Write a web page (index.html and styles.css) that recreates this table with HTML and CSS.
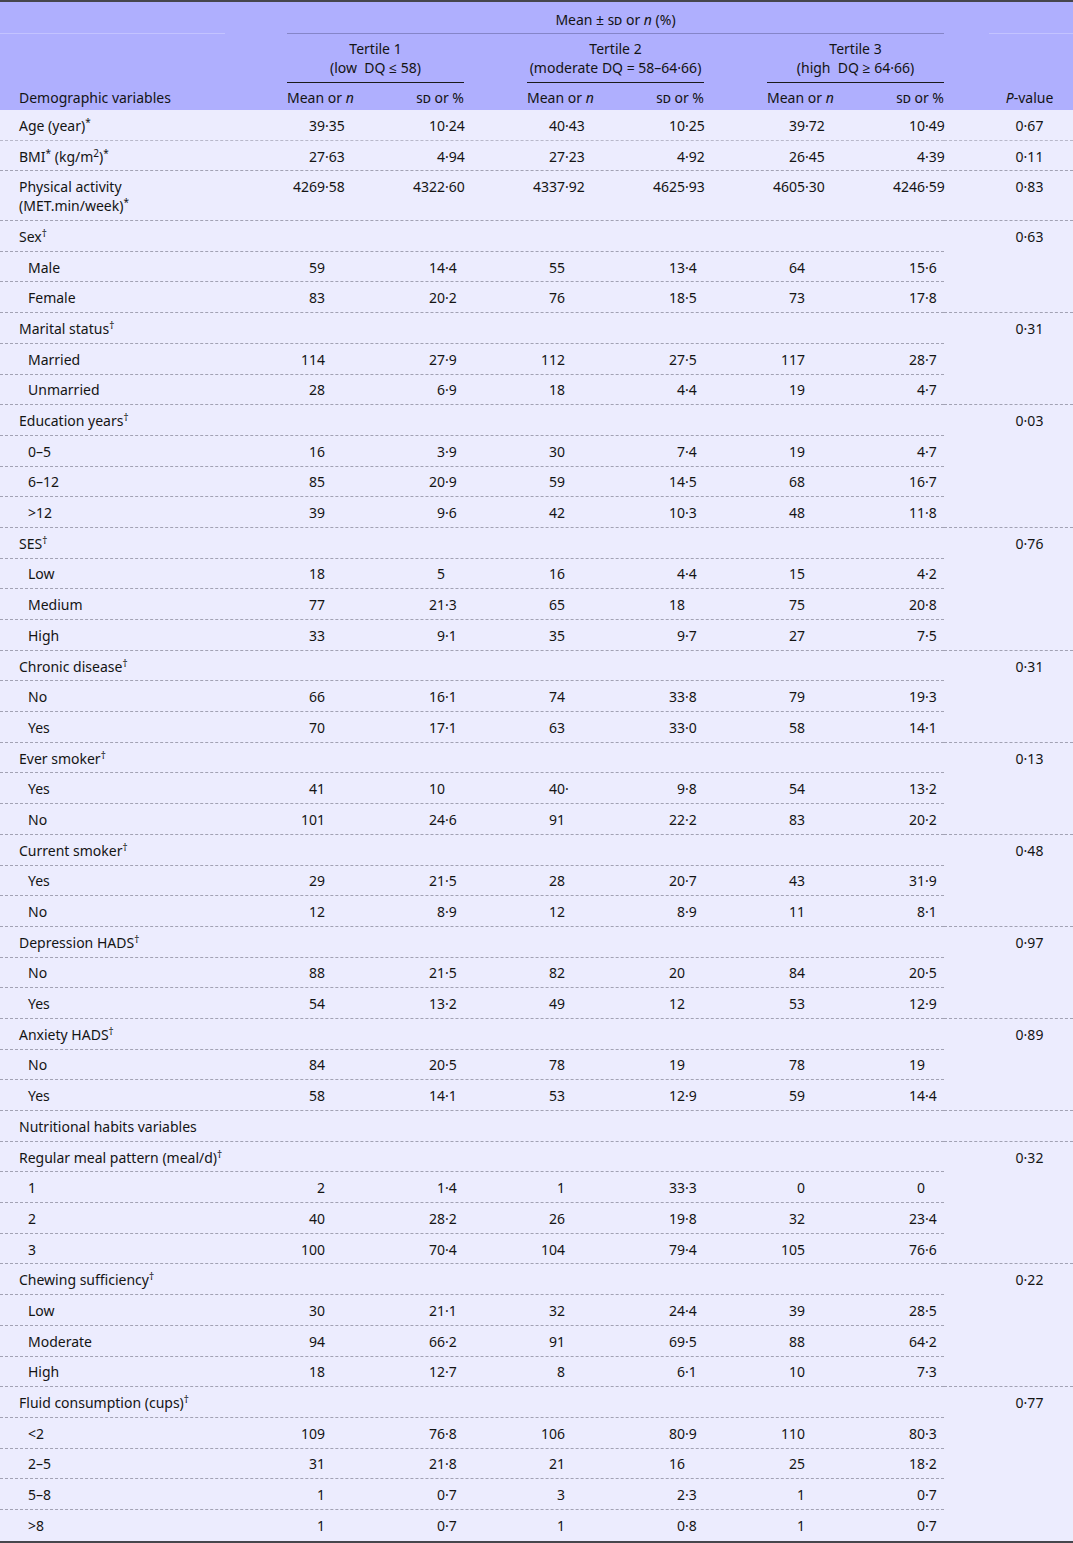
FILE: index.html
```html
<!DOCTYPE html>
<html lang="en">
<head>
<meta charset="utf-8">
<title>Table</title>
<link rel="stylesheet" href="styles.css">
</head>
<body>
<div class="tbl">
  <div class="thead">
    <div class="hr1">
      <div class="hl"></div>
      <div class="hspan">Mean ± <span class="sc">sd</span> or <i>n</i> (%)</div>
      <div class="hp"></div>
    </div>
    <div class="hr2">
      <div class="lab"></div>
      <div class="tt">Tertile 1<br>(low&nbsp; DQ ≤ 58)</div>
      <div class="tt">Tertile 2<br>(moderate DQ = 58–64·66)</div>
      <div class="tt">Tertile 3<br>(high&nbsp; DQ ≥ 64·66)</div>
    </div>
    <div class="hr3">
      <div class="lab">Demographic variables</div>
      <div class="th"><span>Mean or <i>n</i></span><span><span class="sc">sd</span> or %</span></div>
      <div class="th"><span>Mean or <i>n</i></span><span><span class="sc">sd</span> or %</span></div>
      <div class="th"><span>Mean or <i>n</i></span><span><span class="sc">sd</span> or %</span></div>
      <div class="pv"><i>P</i>-value</div>
    </div>
  </div>

  <div class="tbody">
    <div class="r g light"><div class="main"><div class="lab">Age (year)<sup>*</sup></div>
      <div class="t"><span>39</span><span>·35</span><span>10</span><span>·24</span></div>
      <div class="t"><span>40</span><span>·43</span><span>10</span><span>·25</span></div>
      <div class="t"><span>39</span><span>·72</span><span>10</span><span>·49</span></div></div><div class="p">0·67</div></div>

    <div class="r g"><div class="main"><div class="lab">BMI<sup>*</sup> (kg/m<sup>2</sup>)<sup>*</sup></div>
      <div class="t"><span>27</span><span>·63</span><span>4</span><span>·94</span></div>
      <div class="t"><span>27</span><span>·23</span><span>4</span><span>·92</span></div>
      <div class="t"><span>26</span><span>·45</span><span>4</span><span>·39</span></div></div><div class="p">0·11</div></div>

    <div class="r g"><div class="main"><div class="lab">Physical activity<br>(MET.min/week)<sup>*</sup></div>
      <div class="t"><span>4269</span><span>·58</span><span>4322</span><span>·60</span></div>
      <div class="t"><span>4337</span><span>·92</span><span>4625</span><span>·93</span></div>
      <div class="t"><span>4605</span><span>·30</span><span>4246</span><span>·59</span></div></div><div class="p">0·83</div></div>

    <div class="r"><div class="main"><div class="lab">Sex<sup>†</sup></div></div><div class="p">0·63</div></div>
    <div class="r sub"><div class="main"><div class="lab">Male</div>
      <div class="t"><span>59</span><span></span><span>14</span><span>·4</span></div>
      <div class="t"><span>55</span><span></span><span>13</span><span>·4</span></div>
      <div class="t"><span>64</span><span></span><span>15</span><span>·6</span></div></div><div class="p"></div></div>
    <div class="r sub g"><div class="main"><div class="lab">Female</div>
      <div class="t"><span>83</span><span></span><span>20</span><span>·2</span></div>
      <div class="t"><span>76</span><span></span><span>18</span><span>·5</span></div>
      <div class="t"><span>73</span><span></span><span>17</span><span>·8</span></div></div><div class="p"></div></div>

    <div class="r"><div class="main"><div class="lab">Marital status<sup>†</sup></div></div><div class="p">0·31</div></div>
    <div class="r sub"><div class="main"><div class="lab">Married</div>
      <div class="t"><span>114</span><span></span><span>27</span><span>·9</span></div>
      <div class="t"><span>112</span><span></span><span>27</span><span>·5</span></div>
      <div class="t"><span>117</span><span></span><span>28</span><span>·7</span></div></div><div class="p"></div></div>
    <div class="r sub g"><div class="main"><div class="lab">Unmarried</div>
      <div class="t"><span>28</span><span></span><span>6</span><span>·9</span></div>
      <div class="t"><span>18</span><span></span><span>4</span><span>·4</span></div>
      <div class="t"><span>19</span><span></span><span>4</span><span>·7</span></div></div><div class="p"></div></div>

    <div class="r"><div class="main"><div class="lab">Education years<sup>†</sup></div></div><div class="p">0·03</div></div>
    <div class="r sub"><div class="main"><div class="lab">0–5</div>
      <div class="t"><span>16</span><span></span><span>3</span><span>·9</span></div>
      <div class="t"><span>30</span><span></span><span>7</span><span>·4</span></div>
      <div class="t"><span>19</span><span></span><span>4</span><span>·7</span></div></div><div class="p"></div></div>
    <div class="r sub"><div class="main"><div class="lab">6–12</div>
      <div class="t"><span>85</span><span></span><span>20</span><span>·9</span></div>
      <div class="t"><span>59</span><span></span><span>14</span><span>·5</span></div>
      <div class="t"><span>68</span><span></span><span>16</span><span>·7</span></div></div><div class="p"></div></div>
    <div class="r sub g"><div class="main"><div class="lab">&gt;12</div>
      <div class="t"><span>39</span><span></span><span>9</span><span>·6</span></div>
      <div class="t"><span>42</span><span></span><span>10</span><span>·3</span></div>
      <div class="t"><span>48</span><span></span><span>11</span><span>·8</span></div></div><div class="p"></div></div>

    <div class="r"><div class="main"><div class="lab">SES<sup>†</sup></div></div><div class="p">0·76</div></div>
    <div class="r sub"><div class="main"><div class="lab">Low</div>
      <div class="t"><span>18</span><span></span><span>5</span><span></span></div>
      <div class="t"><span>16</span><span></span><span>4</span><span>·4</span></div>
      <div class="t"><span>15</span><span></span><span>4</span><span>·2</span></div></div><div class="p"></div></div>
    <div class="r sub"><div class="main"><div class="lab">Medium</div>
      <div class="t"><span>77</span><span></span><span>21</span><span>·3</span></div>
      <div class="t"><span>65</span><span></span><span>18</span><span></span></div>
      <div class="t"><span>75</span><span></span><span>20</span><span>·8</span></div></div><div class="p"></div></div>
    <div class="r sub g"><div class="main"><div class="lab">High</div>
      <div class="t"><span>33</span><span></span><span>9</span><span>·1</span></div>
      <div class="t"><span>35</span><span></span><span>9</span><span>·7</span></div>
      <div class="t"><span>27</span><span></span><span>7</span><span>·5</span></div></div><div class="p"></div></div>

    <div class="r"><div class="main"><div class="lab">Chronic disease<sup>†</sup></div></div><div class="p">0·31</div></div>
    <div class="r sub"><div class="main"><div class="lab">No</div>
      <div class="t"><span>66</span><span></span><span>16</span><span>·1</span></div>
      <div class="t"><span>74</span><span></span><span>33</span><span>·8</span></div>
      <div class="t"><span>79</span><span></span><span>19</span><span>·3</span></div></div><div class="p"></div></div>
    <div class="r sub g"><div class="main"><div class="lab">Yes</div>
      <div class="t"><span>70</span><span></span><span>17</span><span>·1</span></div>
      <div class="t"><span>63</span><span></span><span>33</span><span>·0</span></div>
      <div class="t"><span>58</span><span></span><span>14</span><span>·1</span></div></div><div class="p"></div></div>

    <div class="r"><div class="main"><div class="lab">Ever smoker<sup>†</sup></div></div><div class="p">0·13</div></div>
    <div class="r sub"><div class="main"><div class="lab">Yes</div>
      <div class="t"><span>41</span><span></span><span>10</span><span></span></div>
      <div class="t"><span>40</span><span>·</span><span>9</span><span>·8</span></div>
      <div class="t"><span>54</span><span></span><span>13</span><span>·2</span></div></div><div class="p"></div></div>
    <div class="r sub g"><div class="main"><div class="lab">No</div>
      <div class="t"><span>101</span><span></span><span>24</span><span>·6</span></div>
      <div class="t"><span>91</span><span></span><span>22</span><span>·2</span></div>
      <div class="t"><span>83</span><span></span><span>20</span><span>·2</span></div></div><div class="p"></div></div>

    <div class="r"><div class="main"><div class="lab">Current smoker<sup>†</sup></div></div><div class="p">0·48</div></div>
    <div class="r sub"><div class="main"><div class="lab">Yes</div>
      <div class="t"><span>29</span><span></span><span>21</span><span>·5</span></div>
      <div class="t"><span>28</span><span></span><span>20</span><span>·7</span></div>
      <div class="t"><span>43</span><span></span><span>31</span><span>·9</span></div></div><div class="p"></div></div>
    <div class="r sub g"><div class="main"><div class="lab">No</div>
      <div class="t"><span>12</span><span></span><span>8</span><span>·9</span></div>
      <div class="t"><span>12</span><span></span><span>8</span><span>·9</span></div>
      <div class="t"><span>11</span><span></span><span>8</span><span>·1</span></div></div><div class="p"></div></div>

    <div class="r"><div class="main"><div class="lab">Depression HADS<sup>†</sup></div></div><div class="p">0·97</div></div>
    <div class="r sub"><div class="main"><div class="lab">No</div>
      <div class="t"><span>88</span><span></span><span>21</span><span>·5</span></div>
      <div class="t"><span>82</span><span></span><span>20</span><span></span></div>
      <div class="t"><span>84</span><span></span><span>20</span><span>·5</span></div></div><div class="p"></div></div>
    <div class="r sub g"><div class="main"><div class="lab">Yes</div>
      <div class="t"><span>54</span><span></span><span>13</span><span>·2</span></div>
      <div class="t"><span>49</span><span></span><span>12</span><span></span></div>
      <div class="t"><span>53</span><span></span><span>12</span><span>·9</span></div></div><div class="p"></div></div>

    <div class="r"><div class="main"><div class="lab">Anxiety HADS<sup>†</sup></div></div><div class="p">0·89</div></div>
    <div class="r sub"><div class="main"><div class="lab">No</div>
      <div class="t"><span>84</span><span></span><span>20</span><span>·5</span></div>
      <div class="t"><span>78</span><span></span><span>19</span><span></span></div>
      <div class="t"><span>78</span><span></span><span>19</span><span></span></div></div><div class="p"></div></div>
    <div class="r sub g"><div class="main"><div class="lab">Yes</div>
      <div class="t"><span>58</span><span></span><span>14</span><span>·1</span></div>
      <div class="t"><span>53</span><span></span><span>12</span><span>·9</span></div>
      <div class="t"><span>59</span><span></span><span>14</span><span>·4</span></div></div><div class="p"></div></div>

    <div class="r g"><div class="main"><div class="lab">Nutritional habits variables</div></div><div class="p"></div></div>

    <div class="r"><div class="main"><div class="lab">Regular meal pattern (meal/d)<sup>†</sup></div></div><div class="p">0·32</div></div>
    <div class="r sub"><div class="main"><div class="lab">1</div>
      <div class="t"><span>2</span><span></span><span>1</span><span>·4</span></div>
      <div class="t"><span>1</span><span></span><span>33</span><span>·3</span></div>
      <div class="t"><span>0</span><span></span><span>0</span><span></span></div></div><div class="p"></div></div>
    <div class="r sub"><div class="main"><div class="lab">2</div>
      <div class="t"><span>40</span><span></span><span>28</span><span>·2</span></div>
      <div class="t"><span>26</span><span></span><span>19</span><span>·8</span></div>
      <div class="t"><span>32</span><span></span><span>23</span><span>·4</span></div></div><div class="p"></div></div>
    <div class="r sub g"><div class="main"><div class="lab">3</div>
      <div class="t"><span>100</span><span></span><span>70</span><span>·4</span></div>
      <div class="t"><span>104</span><span></span><span>79</span><span>·4</span></div>
      <div class="t"><span>105</span><span></span><span>76</span><span>·6</span></div></div><div class="p"></div></div>

    <div class="r"><div class="main"><div class="lab">Chewing sufficiency<sup>†</sup></div></div><div class="p">0·22</div></div>
    <div class="r sub"><div class="main"><div class="lab">Low</div>
      <div class="t"><span>30</span><span></span><span>21</span><span>·1</span></div>
      <div class="t"><span>32</span><span></span><span>24</span><span>·4</span></div>
      <div class="t"><span>39</span><span></span><span>28</span><span>·5</span></div></div><div class="p"></div></div>
    <div class="r sub"><div class="main"><div class="lab">Moderate</div>
      <div class="t"><span>94</span><span></span><span>66</span><span>·2</span></div>
      <div class="t"><span>91</span><span></span><span>69</span><span>·5</span></div>
      <div class="t"><span>88</span><span></span><span>64</span><span>·2</span></div></div><div class="p"></div></div>
    <div class="r sub g"><div class="main"><div class="lab">High</div>
      <div class="t"><span>18</span><span></span><span>12</span><span>·7</span></div>
      <div class="t"><span>8</span><span></span><span>6</span><span>·1</span></div>
      <div class="t"><span>10</span><span></span><span>7</span><span>·3</span></div></div><div class="p"></div></div>

    <div class="r"><div class="main"><div class="lab">Fluid consumption (cups)<sup>†</sup></div></div><div class="p">0·77</div></div>
    <div class="r sub"><div class="main"><div class="lab">&lt;2</div>
      <div class="t"><span>109</span><span></span><span>76</span><span>·8</span></div>
      <div class="t"><span>106</span><span></span><span>80</span><span>·9</span></div>
      <div class="t"><span>110</span><span></span><span>80</span><span>·3</span></div></div><div class="p"></div></div>
    <div class="r sub"><div class="main"><div class="lab">2–5</div>
      <div class="t"><span>31</span><span></span><span>21</span><span>·8</span></div>
      <div class="t"><span>21</span><span></span><span>16</span><span></span></div>
      <div class="t"><span>25</span><span></span><span>18</span><span>·2</span></div></div><div class="p"></div></div>
    <div class="r sub"><div class="main"><div class="lab">5–8</div>
      <div class="t"><span>1</span><span></span><span>0</span><span>·7</span></div>
      <div class="t"><span>3</span><span></span><span>2</span><span>·3</span></div>
      <div class="t"><span>1</span><span></span><span>0</span><span>·7</span></div></div><div class="p"></div></div>
    <div class="r sub last"><div class="main"><div class="lab">&gt;8</div>
      <div class="t"><span>1</span><span></span><span>0</span><span>·7</span></div>
      <div class="t"><span>1</span><span></span><span>0</span><span>·8</span></div>
      <div class="t"><span>1</span><span></span><span>0</span><span>·7</span></div></div><div class="p"></div></div>
  </div>
</div>
</body>
</html>
```

FILE: styles.css
```css
html, body {
  margin: 0;
  padding: 0;
  background: #ececfe;
}
body {
  font-family: "Noto Sans", "Open Sans", "DejaVu Sans", sans-serif;
  font-size: 14px;
  line-height: 19px;
  color: #141414;
}
.tbl {
  width: 1073px;
  border-top: 2px solid #46464c;
  border-bottom: 2px solid #46464c;
  background: #ececfe;
}
.sc {
  font-variant: small-caps;
}
sup {
  font-size: 10px;
  line-height: 0;
  vertical-align: 5px;
}

/* header */
.thead {
  background: #afaffe;
}
.hr1 {
  display: flex;
  height: 32px;
}
.hl {
  width: 225px;
  margin-right: 62px;
  border-bottom: 1px solid #c3c3ff;
}
.hspan {
  width: 657px;
  text-align: center;
  padding-top: 7.5px;
  box-sizing: border-box;
  border-bottom: 1px solid #8585c8;
}
.hp {
  flex: 1;
  margin-left: 45px;
  border-bottom: 1px solid #c3c3ff;
}
.hr2 {
  display: flex;
  padding-top: 4.5px;
  height: 48.5px;
  box-sizing: border-box;
}
.hr2 .lab {
  width: 287px;
}
.tt {
  width: 177px;
  text-align: center;
  padding-bottom: 5px;
  border-bottom: 1px solid #1a1a1a;
  align-self: flex-start;
}
.tt + .tt {
  margin-left: 63px;
}
.hr3 {
  display: flex;
  height: 27.5px;
  padding-top: 5px;
  box-sizing: border-box;
}
.hr3 .lab {
  width: 287px;
  padding-left: 19px;
  box-sizing: border-box;
}
.th {
  width: 177px;
  display: flex;
  justify-content: space-between;
}
.th + .th {
  margin-left: 63px;
}
.pv {
  flex: 1;
  padding-left: 42px;
  text-align: center;
}

/* body */
.r {
  display: flex;
}
.main {
  width: 944px;
  display: flex;
  align-items: flex-start;
  padding: 5.85px 0 4.85px;
  border-bottom: 1px dashed #a2a2b4;
}
.p {
  flex: 1;
  padding: 5.85px 0 4.85px 42px;
  text-align: center;
  border-bottom: 1px dashed transparent;
}
.r.g .p {
  border-bottom-color: #a2a2b4;
}
.r.light .main,
.r.light .p {
  border-bottom-color: #b8b8ca;
}
.r.last .main,
.r.last .p {
  border-bottom: none;
  padding-bottom: 5.85px;
}
.lab {
  width: 287px;
  padding-left: 19px;
  box-sizing: border-box;
  flex: none;
}
.sub .lab {
  padding-left: 28px;
}
.t {
  width: 177px;
  display: flex;
  flex: none;
}
.t + .t {
  margin-left: 63px;
}
.t span {
  display: block;
  white-space: nowrap;
}
.t span:nth-child(1) {
  width: 38px;
  text-align: right;
}
.t span:nth-child(2) {
  width: 50px;
}
.t span:nth-child(3) {
  width: 70px;
  text-align: right;
}
.t span:nth-child(4) {
  width: 19px;
}
```
